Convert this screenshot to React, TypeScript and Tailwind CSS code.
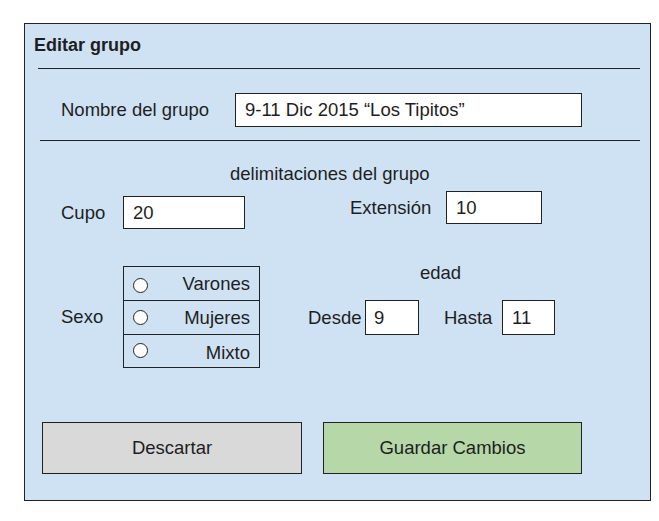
import React from "react";

function Radio({
  label,
  h,
  circleOffset = 0,
  textOffset = 0,
}: {
  label: string;
  h: string;
  circleOffset?: number;
  textOffset?: number;
}) {
  return (
    <div className={`flex ${h} items-center justify-between pl-[9px] pr-[9px]`}>
      <div
        className="h-[15px] w-[15px] rounded-full border border-[#222] bg-white"
        style={{ marginTop: circleOffset }}
      />
      <span style={{ marginTop: textOffset }}>{label}</span>
    </div>
  );
}

export default function App() {
  return (
    <div
      className="h-[521px] w-[659px] bg-white pl-[24px] pt-[23px] text-[18.5px] text-[#1e1e1e]"
      style={{ fontFamily: '"Liberation Sans", Arial, sans-serif' }}
    >
      <div className="flex h-[478px] w-[627px] flex-col border border-[#222] bg-[#cfe2f3]">
        <div className="ml-[9px] mt-[11px] h-[20px] text-[18px] font-bold leading-[20px]">Editar grupo</div>
        <div className="ml-[13px] mt-[13px] h-px w-[602px] bg-[#222]" />

        <div className="ml-[36px] mt-[24px] flex h-[34px] items-center">
          <div className="w-[174px] leading-[22px]">Nombre del grupo</div>
          <div className="flex h-[34px] w-[347px] items-center border border-[#222] bg-white pl-[9px] leading-[22px]">
            9-11 Dic 2015 “Los Tipitos”
          </div>
        </div>

        <div className="ml-[15px] mt-[13px] h-px w-[600px] bg-[#222]" />

        <div className="ml-[205px] mt-[22px] h-[22px] leading-[22px]">delimitaciones del grupo</div>

        <div className="ml-[36px] mt-[6px] flex items-start">
          <div className="mt-[5px] flex h-[33px] items-center">
            <div className="w-[62px] leading-[22px]">Cupo</div>
            <div className="flex h-[33px] w-[122px] items-center border border-[#222] bg-white pl-[9px] leading-[22px]">
              20
            </div>
          </div>
          <div className="ml-[105px] flex h-[33px] items-center">
            <div className="w-[96px] leading-[22px]">Extensión</div>
            <div className="flex h-[33px] w-[96px] items-center border border-[#222] bg-white pl-[9px] leading-[22px]">
              10
            </div>
          </div>
        </div>

        <div className="ml-[36px] mt-[33px] flex items-start">
          <div className="mt-[4px] flex items-center">
            <div className="w-[62px] leading-[22px]">Sexo</div>
            <div className="flex w-[137px] flex-col border border-[#222] leading-[22px]">
              <Radio label="Varones" h="h-[33px]" circleOffset={3} />
              <div className="h-px bg-[#222]" />
              <Radio label="Mujeres" h="h-[33px]" />
              <div className="h-px bg-[#222]" />
              <Radio label="Mixto" h="h-[32px]" circleOffset={-2} textOffset={3} />
            </div>
          </div>
          <div className="ml-[48px] flex flex-col">
            <div className="ml-[112px] h-[22px] leading-[22px]">edad</div>
            <div className="mt-[16px] flex h-[35px] items-center">
              <div className="w-[57px] leading-[22px]">Desde</div>
              <div className="flex h-[35px] w-[54px] items-center border border-[#222] bg-white pl-[8px] leading-[22px]">
                9
              </div>
              <div className="ml-[25px] w-[58px] leading-[22px]">Hasta</div>
              <div className="flex h-[35px] w-[53px] items-center border border-[#222] bg-white pl-[9px] leading-[22px]">
                11
              </div>
            </div>
          </div>
        </div>

        <div className="ml-[17px] mt-[54px] flex">
          <div className="flex h-[52px] w-[260px] items-center justify-center border border-[#222] bg-[#d9d9d9]">
            Descartar
          </div>
          <div className="ml-[21px] flex h-[52px] w-[259px] items-center justify-center border border-[#222] bg-[#b6d7a8]">
            Guardar Cambios
          </div>
        </div>
      </div>
    </div>
  );
}
